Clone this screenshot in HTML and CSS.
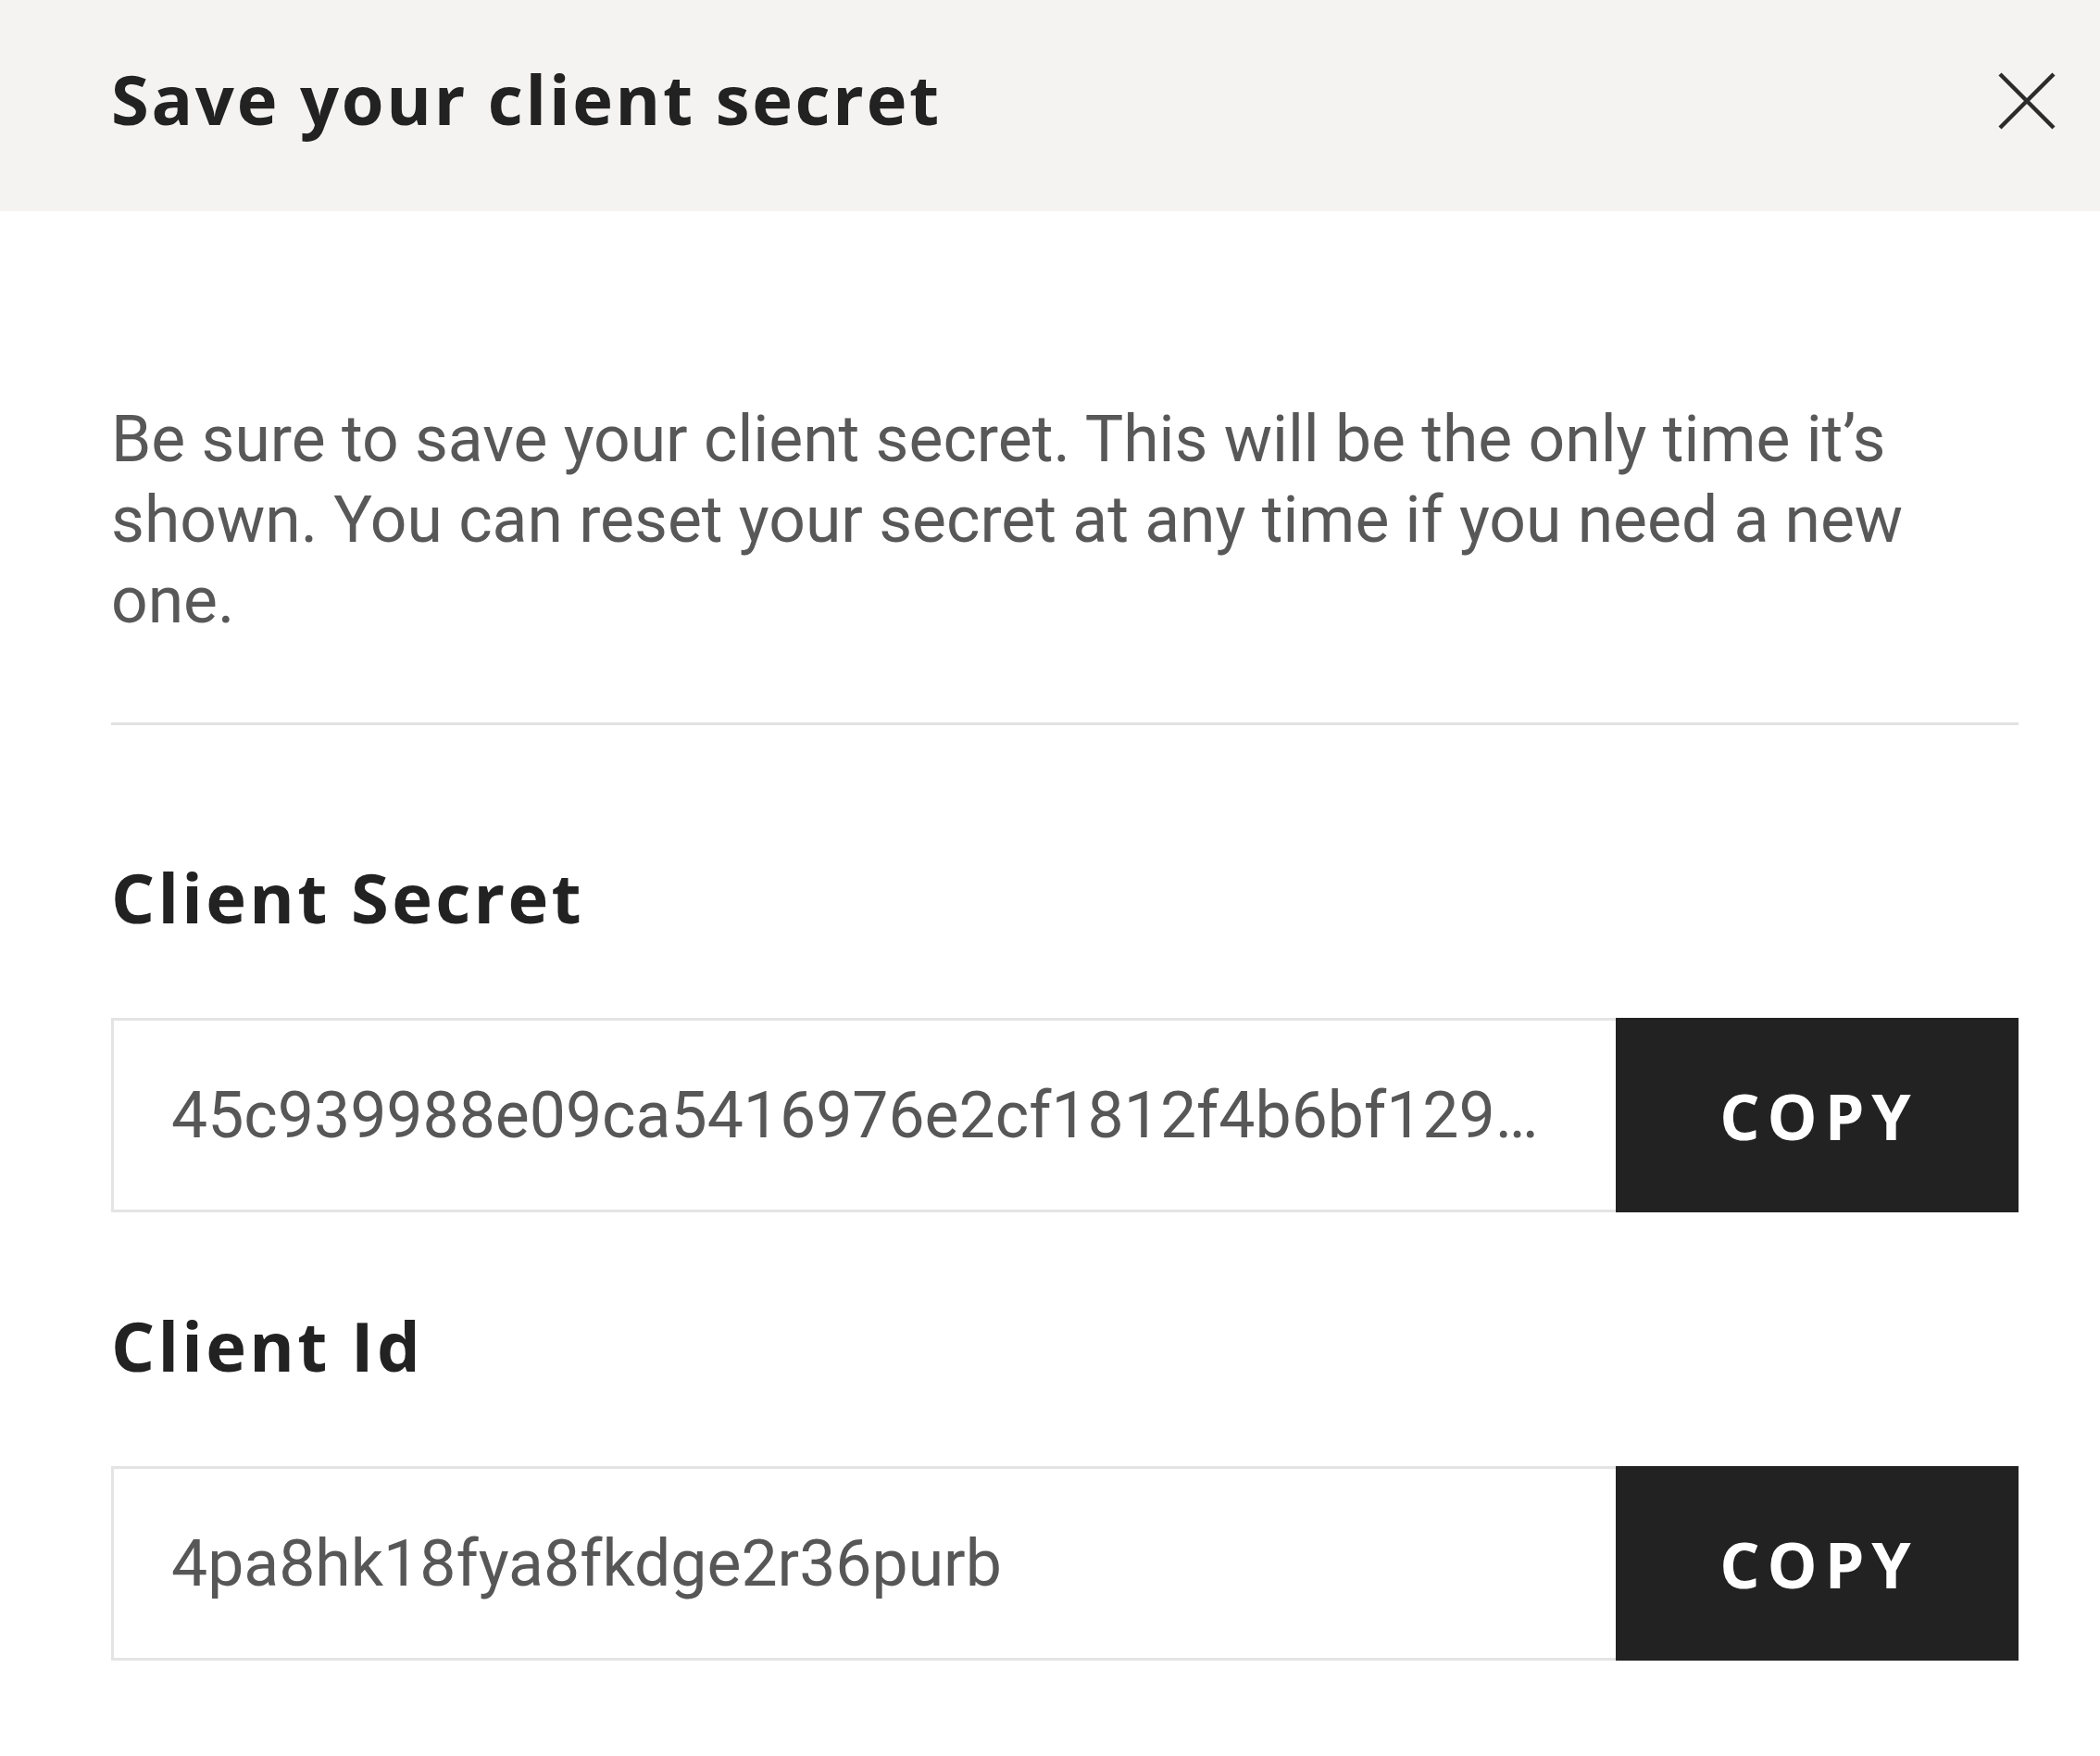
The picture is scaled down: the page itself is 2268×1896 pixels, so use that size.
FILE: index.html
```html
<!DOCTYPE html>
<html lang="en">
<head>
<meta charset="utf-8">
<title>Save your client secret</title>
<link rel="stylesheet" href="styles.css">
</head>
<body>
<div class="modal">
  <header class="modal-header">
    <h1 class="modal-title">Save your client secret</h1>
    <button class="close-btn" aria-label="Close">
      <svg viewBox="0 0 64 64" width="64" height="64"><path d="M3 3 L61 61 M61 3 L3 61" stroke="#2b2b2b" stroke-width="4.5" fill="none"/></svg>
    </button>
  </header>
  <main class="modal-body">
    <p class="desc">Be sure to save your client secret. This will be the only time it’s shown. You can reset your secret at any time if you need a new one.</p>
    <hr class="divider">
    <section class="field-group">
      <h2 class="field-label">Client Secret</h2>
      <div class="field">
        <div class="field-value">45c939988e09ca5416976e2cf1812f4b6bf129…</div>
        <button class="copy-btn">COPY</button>
      </div>
    </section>
    <section class="field-group second">
      <h2 class="field-label">Client Id</h2>
      <div class="field">
        <div class="field-value">4pa8hk18fya8fkdge2r36purb</div>
        <button class="copy-btn">COPY</button>
      </div>
    </section>
  </main>
</div>
</body>
</html>
```

FILE: styles.css
```css
html, body {
  margin: 0;
  padding: 0;
  background: #ffffff;
}
.modal {
  width: 2268px;
  height: 1896px;
  overflow: hidden;
  background: #ffffff;
}
.modal-header {
  height: 228px;
  box-sizing: border-box;
  background: #f4f3f1;
  display: flex;
  align-items: center;
  justify-content: space-between;
  padding: 0 47px 0 120px;
}
.modal-title {
  margin: -15px 0 0;
  font-family: "Open Sans", "Noto Sans", sans-serif;
  font-weight: 700;
  font-size: 74px;
  line-height: 92px;
  letter-spacing: 2.7px;
  color: #222222;
}
.close-btn {
  border: 0;
  background: transparent;
  padding: 0;
  width: 64px;
  height: 64px;
  display: flex;
  margin-top: -10px;
}
.modal-body {
  padding: 0 88px 0 120px;
}
.desc {
  margin: 203px 0 0;
  font-family: Roboto, "Liberation Sans", sans-serif;
  font-size: 69.6px;
  line-height: 87px;
  color: #585858;
  max-width: 2000px;
}
.divider {
  margin: 88px 0 0;
  border: 0;
  height: 3px;
  background: #e2e2e2;
}
.field-group {
  margin-top: 140px;
}
.field-group.second {
  margin-top: 98px;
}
.field-label {
  margin: 0;
  font-family: "Open Sans", "Noto Sans", sans-serif;
  font-weight: 700;
  font-size: 74px;
  line-height: 92px;
  letter-spacing: 3.3px;
  color: #222222;
}
.field {
  margin-top: 84px;
  display: flex;
  height: 210px;
}
.field-value {
  flex: 1;
  box-sizing: border-box;
  border: 3px solid #e4e4e4;
  border-right: 0;
  display: flex;
  align-items: center;
  padding-left: 62px;
  font-family: Roboto, "Liberation Sans", sans-serif;
  font-size: 69.7px;
  color: #575757;
  white-space: nowrap;
  overflow: hidden;
}
.copy-btn {
  width: 435px;
  border: 0;
  background: #222222;
  color: #ffffff;
  font-family: "Open Sans", "Noto Sans", sans-serif;
  font-weight: 700;
  font-size: 68px;
  letter-spacing: 8px;
  padding: 0 0 0 4px;
}
```
